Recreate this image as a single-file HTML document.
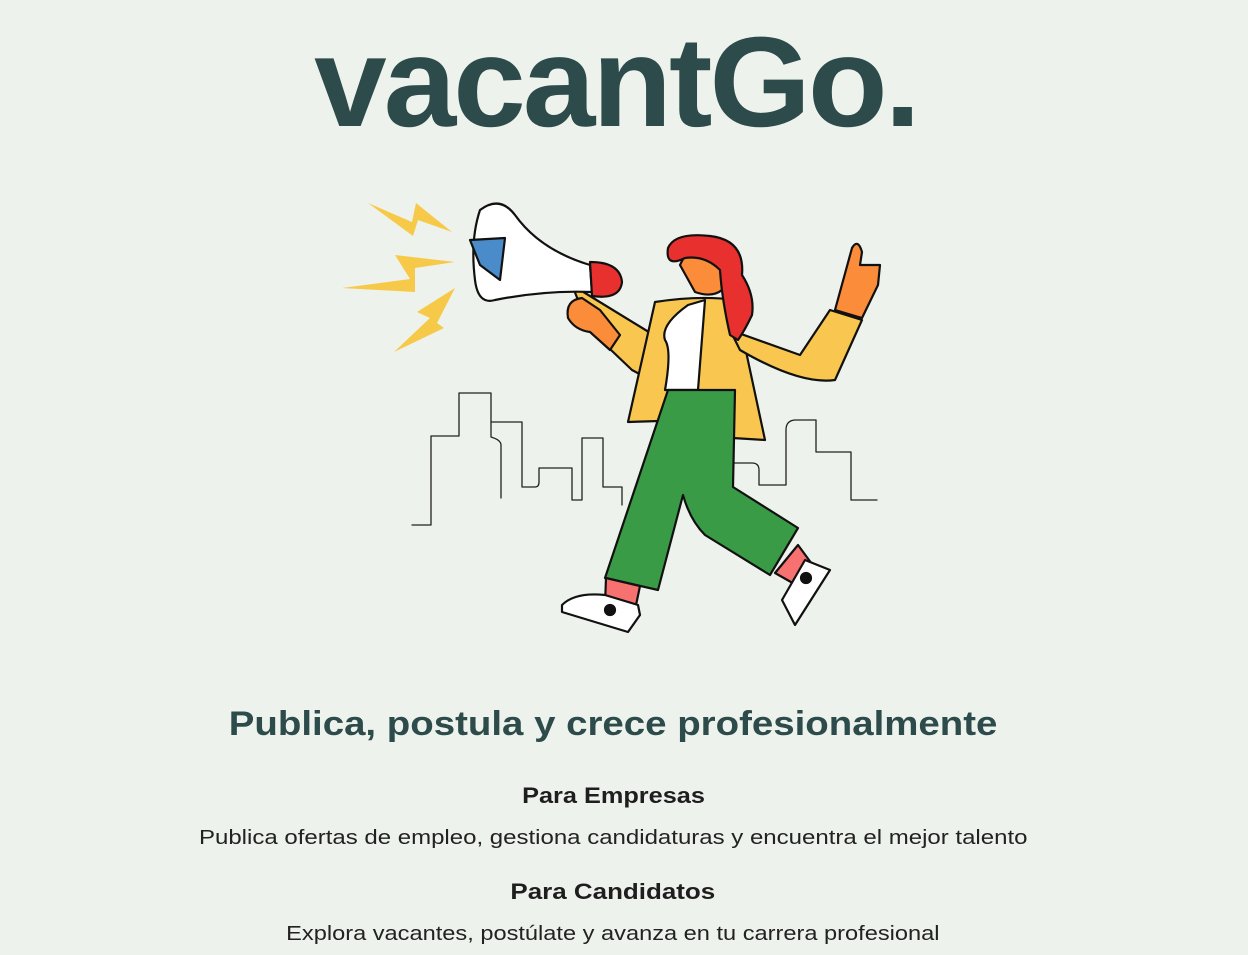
<!DOCTYPE html>
<html><head><meta charset="utf-8"><style>
html,body{margin:0;padding:0}
body{width:1248px;height:955px;background:#eef2ec;position:relative;overflow:hidden;font-family:"Liberation Sans",sans-serif}
.logo{position:absolute;left:-8px;width:1248px;top:-2px;text-align:center;font-weight:bold;font-size:128px;letter-spacing:-3px;color:#2d4b4a;line-height:170px}
.logo span{display:inline-block;transform:scaleX(1.02)}
.h{position:absolute;left:-11px;width:1248px;text-align:center}
.h span{display:inline-block}
.h1{top:705px;font-size:34px;font-weight:bold;color:#2d4b4a}
.h2{font-size:22px;font-weight:bold;color:#1e1e1e}
.p{font-size:20px;color:#222}
</style></head><body>
<div class="logo"><span>vacantGo.</span></div>
<svg width="1248" height="955" style="position:absolute;left:0;top:0" stroke-linejoin="round" stroke-linecap="round">
<g fill="none" stroke="#222" stroke-width="1.3">
<path d="M412,525H431V436H459V393H491V437Q501,440 501,445V498"/>
<path d="M491,422H522V487H535Q539,487 539,482V468H572V500H582V438H603V487H622V505"/>
<path d="M734,463H752Q759,463 759,470V485H786V430Q786,420 796,420H816V452H851V500H877"/>
</g>
<g fill="#f7c948">
<polygon points="368,203 412,222 416,203 452,232 418,220 413,236"/>
<polygon points="342,288 410,279 395,255 455,262 415,268 415,292"/>
<polygon points="394,352 430,318 417,312 455,288 437,323 444,328"/>
</g>
<g stroke="#111" stroke-width="2.2">
<path d="M572,285 L590,330 L632,370 L660,385 L670,345 Z" fill="#f9c74f"/>
<path d="M582,298 Q565,300 568,318 Q575,330 590,332 L610,350 L620,335 L600,310 Z" fill="#fb8c3a"/>
<path d="M480,210 Q500,195 515,215 Q540,250 590,265 L592,292 Q545,290 495,300 Q478,305 475,280 Q470,240 480,210Z" fill="#fff"/>
<path d="M470,240 L505,238 L500,280 L480,265 Z" fill="#4a8bc9"/>
<path d="M590,262 Q620,262 622,282 Q620,300 592,296 Z" fill="#e8312f"/>
<path d="M655,302 Q700,295 735,300 L765,440 L700,436 L692,420 L628,422 Z" fill="#f9c74f"/>
<path d="M688,305 L705,300 L698,390 L665,390 Q672,350 665,340 Q660,325 688,305Z" fill="#fff"/>
<path d="M730,330 L800,355 L830,310 L862,320 L835,380 Q800,385 740,350 Z" fill="#f9c74f"/>
<path d="M835,310 L852,248 Q858,238 862,252 L860,265 L880,265 L878,285 L862,318 Z" fill="#fb8c3a"/>
<path d="M668,390 L735,390 L733,487 L798,528 L770,575 L705,535 Q690,520 683,495 L658,590 L605,578 Z" fill="#3a9b47"/>
<path d="M606,578 L640,586 L635,610 L605,605 Z" fill="#f87171"/>
<path d="M775,573 L798,545 L820,575 L805,590 Z" fill="#f87171"/>
<path d="M562,605 Q575,592 605,595 L638,605 L640,615 L628,632 L562,612 Z" fill="#fff"/>
<path d="M805,560 L830,570 L795,625 L782,600 Z" fill="#fff"/>
<circle cx="610" cy="610" r="5" fill="#111"/>
<circle cx="806" cy="578" r="5" fill="#111"/>
<path d="M685,255 Q710,248 720,265 L722,290 Q712,298 695,292 L680,265 Z" fill="#fb8c3a"/>
<path d="M668,248 Q675,232 710,236 Q745,240 742,275 Q755,295 752,315 Q745,330 738,340 L730,335 Q722,300 720,270 Q705,255 685,258 Q665,268 668,248Z" fill="#e8312f"/>
</g>
</svg>
<div class="h h1"><span style="transform:scaleX(1.13)">Publica, postula y crece profesionalmente</span></div>
<div class="h h2" style="top:783px"><span style="transform:scaleX(1.15)">Para Empresas</span></div>
<div class="h p" style="top:827px"><span style="transform:scaleX(1.2)">Publica ofertas de empleo, gestiona candidaturas y encuentra el mejor talento</span></div>
<div class="h h2" style="top:879px"><span style="transform:scaleX(1.18)">Para Candidatos</span></div>
<div class="h p" style="top:923px"><span style="transform:scaleX(1.18)">Explora vacantes, postúlate y avanza en tu carrera profesional</span></div>
</body></html>
